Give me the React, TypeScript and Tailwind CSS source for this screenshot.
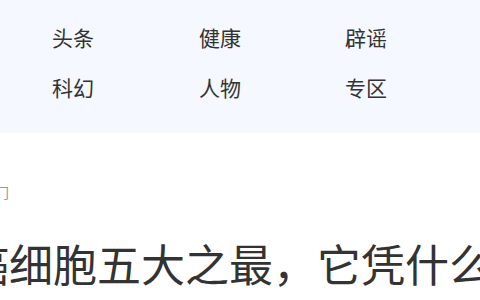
const NAV = ["头条", "健康", "辟谣", "科幻", "人物", "专区"];

export default function App() {
  return (
    <div
      className="w-[480px] h-[300px] overflow-hidden bg-white"
      style={{ fontFamily: '"Noto Sans CJK SC", "Noto Sans", sans-serif' }}
    >
      {/* 分类导航 */}
      <div className="h-[133px] bg-[#f5f8ff] pt-[12px] pl-[52px]">
        <div className="grid grid-cols-[147px_146px_146px]">
          {NAV.map((item) => (
            <span key={item} className="text-[21px] leading-[50px] text-[#333]">
              {item}
            </span>
          ))}
        </div>
      </div>

      {/* 文章 */}
      <div className="whitespace-nowrap">
        <p className="mt-[50px] -ml-[19px] text-[14px] leading-[18px] text-[#999]">热门</p>
        <h1 className="mt-[35px] -ml-[35px] text-[44px] leading-[54px] text-[#333]">
          癌细胞五大之最，它凭什么成为生命的起点？
        </h1>
      </div>
    </div>
  );
}
